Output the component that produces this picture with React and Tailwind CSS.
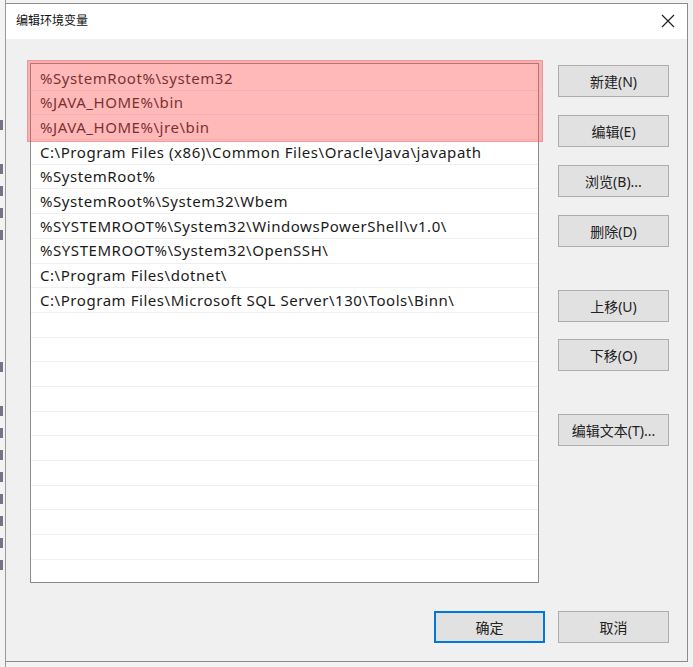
const paths = [
  "%SystemRoot%\\system32",
  "%JAVA_HOME%\\bin",
  "%JAVA_HOME%\\jre\\bin",
  "C:\\Program Files (x86)\\Common Files\\Oracle\\Java\\javapath",
  "%SystemRoot%",
  "%SystemRoot%\\System32\\Wbem",
  "%SYSTEMROOT%\\System32\\WindowsPowerShell\\v1.0\\",
  "%SYSTEMROOT%\\System32\\OpenSSH\\",
  "C:\\Program Files\\dotnet\\",
  "C:\\Program Files\\Microsoft SQL Server\\130\\Tools\\Binn\\",
];

const rows = [...paths, ...Array(11).fill("")];

// glyph bits of the window behind the dialog, peeking out on the left
const behind = [0, 0, 0, 1, 0, 1, 1, 1, 1, 0, 0, 0, 0, 0, 1, 0, 1, 1, 1, 1, 1, 1, 1, 1];

const font = { fontFamily: '"Noto Sans", "Noto Sans CJK SC", sans-serif' };

function Btn({ children, primary }) {
  return (
    <button
      className={
        primary
          ? "w-[111px] h-[32px] bg-[#e1e1e1] border-2 border-[#0078d7] text-[14px] text-[#222]"
          : "w-[111px] h-[32px] bg-[#e1e1e1] border border-[#adadad] text-[14px] text-[#222]"
      }
    >
      {children}
    </button>
  );
}

export default function App() {
  return (
    <div className="w-[693px] h-[667px] bg-[#f3f3f3] flex overflow-hidden" style={font}>
      {/* window behind */}
      <div className="w-[6px] shrink-0 border-r border-[#9a9a9a] overflow-hidden flex flex-col pt-[52px] gap-[8px]">
        {behind.map((on, i) => (
          <div key={i} className="h-[14px] flex items-center">
            {on ? <div className="w-[3px] h-[10px] bg-[#3a3f55] opacity-70" /> : null}
          </div>
        ))}
      </div>

      {/* dialog */}
      <div className="mt-[3px] w-[682px] h-[659px] shrink-0 border border-[#8c8c8c] border-l-0 bg-[#f0f0f0] flex flex-col">
        {/* title bar */}
        <div className="h-[35px] bg-white flex items-center justify-between pl-[10px] pr-[10px]">
          <span className="text-[12px] text-[#111] mb-[2px]">编辑环境变量</span>
          <svg width="16" height="16" viewBox="0 0 16 16" className="mr-[1px] mb-[1px]">
            <path d="M2 2 L14 14 M14 2 L2 14" stroke="#222" strokeWidth="1.2" />
          </svg>
        </div>

        {/* body */}
        <div className="flex-1 pl-[24px] pt-[24px] flex flex-col">
          <div className="flex gap-[19px]">
            <div className="relative w-[509px] h-[520px] bg-white border border-[#8d8d8d] pt-[2px]">
              <div className="h-full overflow-hidden">
                {rows.map((p, i) => (
                  <div
                    key={i}
                    className="h-[24.7px] border-b border-[#efefef] pl-[9px] flex items-center text-[15px] tracking-[0.55px] text-[#1a1a1a] whitespace-nowrap"
                  >
                    {p}
                  </div>
                ))}
              </div>
              {/* red highlight mark */}
              <div className="absolute left-[-4px] top-[-4px] w-[516px] h-[82px] bg-[rgba(255,80,80,0.4)] border border-[rgba(220,70,70,0.25)]" />
            </div>

            <div className="flex flex-col pt-[2px]">
              <Btn>新建(N)</Btn>
              <div className="h-[18px]" />
              <Btn>编辑(E)</Btn>
              <div className="h-[18px]" />
              <Btn>浏览(B)...</Btn>
              <div className="h-[18px]" />
              <Btn>删除(D)</Btn>
              <div className="h-[43px]" />
              <Btn>上移(U)</Btn>
              <div className="h-[17px]" />
              <Btn>下移(O)</Btn>
              <div className="h-[43px]" />
              <Btn>编辑文本(T)...</Btn>
            </div>
          </div>

          <div className="flex justify-end gap-[13px] pr-[18px] mt-[28px]">
            <Btn primary>确定</Btn>
            <Btn>取消</Btn>
          </div>
        </div>
      </div>
    </div>
  );
}
